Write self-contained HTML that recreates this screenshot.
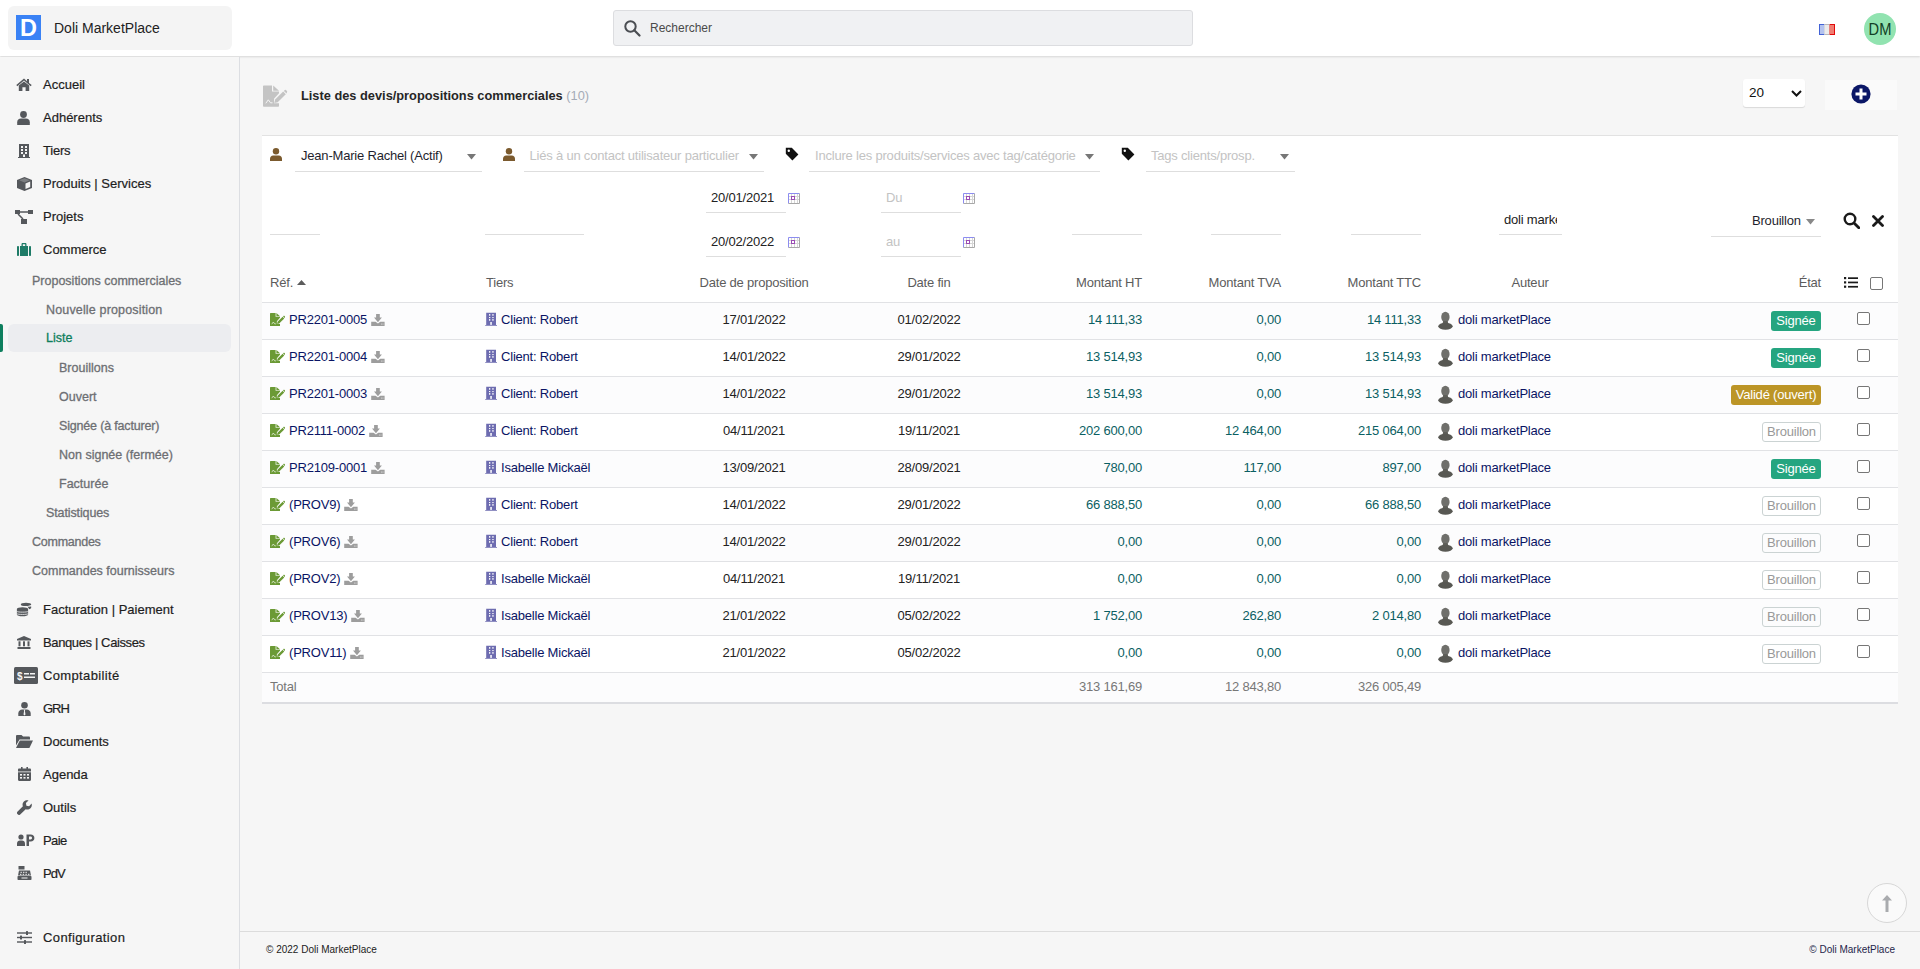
<!DOCTYPE html>
<html><head><meta charset="utf-8"><style>
html,body{margin:0;padding:0}
body{width:1920px;height:969px;position:relative;overflow:hidden;background:#f6f6f6;font-family:"Liberation Sans", sans-serif;}
#hdr{position:absolute;left:0;top:0;width:1920px;height:56px;background:#fff;box-shadow:0 1px 2px rgba(0,0,0,0.13)}
#side{position:absolute;left:0;top:57px;width:239px;height:912px;border-right:1px solid #dcdee2;background:#f6f6f6}
.t{position:absolute;white-space:nowrap}
.sm{font-size:13px;line-height:18px;color:#1e1e1e;-webkit-text-stroke:0.2px currentColor}
.ss{font-size:12.5px;line-height:18px;-webkit-text-stroke:0.3px currentColor}
</style></head><body>
<div id="hdr"></div>
<div style="position:absolute;left:8px;top:6px;width:224px;height:44px;background:#f4f4f4;border-radius:6px"></div>
<div style="position:absolute;left:16px;top:15px;width:25px;height:25px;background:#3a82f5"></div>
<div class="t" style="left:16px;top:16px;width:25px;line-height:25px;text-align:center;color:#fff;font-weight:bold;font-size:23.5px">D</div>
<div class="t" style="left:54px;top:19px;font-size:14px;line-height:18px;color:#222">Doli MarketPlace</div>
<div style="position:absolute;left:613px;top:10px;width:578px;height:34px;background:#f0f1f3;border:1px solid #dcdde0;border-radius:3px"></div>
<svg style="position:absolute;left:624px;top:20px;width:17px;height:17px" viewBox="0 0 17 17" ><circle cx="6.5" cy="6.5" r="5.2" fill="none" stroke="#4a4d52" stroke-width="2"/><path d="M10.3 10.3L15.5 15.5" stroke="#4a4d52" stroke-width="2.2" stroke-linecap="round"/></svg>
<div class="t" style="left:650px;top:20px;font-size:12px;line-height:16px;color:#4a4a4a">Rechercher</div>
<svg style="position:absolute;left:1819px;top:24px;width:16px;height:11px" viewBox="0 0 16 11" ><rect x="0" y="0" width="5.4" height="11" fill="#4262d6"/><rect x="1" y="1" width="4.4" height="9" fill="#b4c3ee"/><rect x="5.4" y="0" width="5.2" height="11" fill="#b9b9b9"/><rect x="5.4" y="1" width="5.2" height="9" fill="#ececec"/><rect x="10.6" y="0" width="5.4" height="11" fill="#e20a0a"/><rect x="10.6" y="1" width="4.4" height="9" fill="#f07d72"/></svg>
<div style="position:absolute;left:1864px;top:13px;width:32px;height:32px;border-radius:50%;background:#91e3b0"></div>
<div class="t" style="left:1864px;top:13px;width:32px;line-height:32px;text-align:center;font-size:16.3px;color:#123f26;transform:scaleX(0.9)">DM</div>
<div id="side"></div>
<svg style="position:absolute;left:16px;top:78px;width:16px;height:13px" viewBox="0 0 16 13" ><path fill="#55585c" d="M8 0.6L0.3 7.1l1 1.1L8 2.6l6.7 5.6 1-1.1L13 4.9V1h-2v2.2z"/><path fill="#55585c" d="M2.8 7.6L8 3.4l5.2 4.2V13H9.6V9.3H6.4V13H2.8z"/></svg>
<div class="t sm" style="left:43px;top:76px;letter-spacing:0px">Accueil</div>
<svg style="position:absolute;left:17px;top:111px;width:13px;height:14px" viewBox="0 0 13 14" ><circle cx="6.5" cy="3.5" r="3.4" fill="#55585c"/><path fill="#55585c" d="M0.2 11.2C0.2 9 1.8 7.6 4 7.6h5c2.2 0 3.8 1.4 3.8 3.6V14H0.2z"/></svg>
<div class="t sm" style="left:43px;top:109px;letter-spacing:0px">Adhérents</div>
<svg style="position:absolute;left:18px;top:144px;width:12px;height:14px" viewBox="0 0 12 14" ><path fill="#55585c" d="M1 0h10v13h1v1H0v-1h1z"/><g fill="#f5f5f5"><rect x="3" y="2" width="2" height="2"/><rect x="7" y="2" width="2" height="2"/><rect x="3" y="5" width="2" height="2"/><rect x="7" y="5" width="2" height="2"/><rect x="3" y="8" width="2" height="2"/><rect x="7" y="8" width="2" height="2"/><rect x="5" y="10.5" width="2" height="2.5"/></g></svg>
<div class="t sm" style="left:43px;top:142px;letter-spacing:-0.2px">Tiers</div>
<svg style="position:absolute;left:17px;top:177px;width:15px;height:14px" viewBox="0 0 15 14" ><path fill="#55585c" d="M7.5 0L15 3v8l-7.5 3L0 11V3z"/><path fill="#f5f5f5" d="M2 4.2l5.5 2.2v5.3L2 9.6z" opacity="0"/><path fill="#f5f5f5" d="M8.5 6.4l4.7-1.9v5.6l-4.7 1.9z"/><path fill="#f5f5f5" d="M2.2 3.3L7.5 1.3l5.3 2-5.3 2.1z" opacity="0.25"/></svg>
<div class="t sm" style="left:43px;top:175px;letter-spacing:0px">Produits | Services</div>
<svg style="position:absolute;left:15px;top:210px;width:18px;height:14px" viewBox="0 0 18 14" ><rect x="0" y="0" width="5" height="4" fill="#55585c"/><rect x="13" y="0" width="5" height="4" fill="#55585c"/><rect x="6" y="9" width="6" height="5" fill="#55585c"/><path d="M5 2h8M3 4l5 5" stroke="#55585c" stroke-width="1.5" fill="none"/></svg>
<div class="t sm" style="left:43px;top:208px;letter-spacing:0px">Projets</div>
<svg style="position:absolute;left:17px;top:243px;width:14px;height:13px" viewBox="0 0 14 13" ><rect x="0" y="3" width="2" height="10" rx="0.8" fill="#1e7b67"/><rect x="12" y="3" width="2" height="10" rx="0.8" fill="#1e7b67"/><path fill="#1e7b67" d="M3 3h1.5V1.2C4.5 0.5 5 0 5.7 0h2.6c0.7 0 1.2 0.5 1.2 1.2V3H11v10H3zM5.8 1.2V3h2.4V1.2z"/></svg>
<div class="t sm" style="left:43px;top:241px;letter-spacing:0px">Commerce</div>
<svg style="position:absolute;left:16px;top:601px;width:16px;height:16px" viewBox="0 0 16 16" ><g fill="#55585c"><ellipse cx="10" cy="3.4" rx="5.2" ry="1.7"/><path d="M11.5 5.6h3.7v1.2c0 0.6-0.8 1.1-2 1.4z"/><ellipse cx="6.5" cy="8" rx="5.6" ry="1.8"/><path d="M0.9 8h11.2v5.4c0 1-2.5 1.8-5.6 1.8s-5.6-0.8-5.6-1.8z"/></g><g fill="none" stroke="#f5f5f5" stroke-width="0.8"><path d="M0.9 10.4c0.8 1 10.4 1 11.2 0M0.9 12.7c0.8 1 10.4 1 11.2 0M12.2 5.3c1 -0.2 2.6-0.6 3-1.2"/></g></svg>
<div class="t sm" style="left:43px;top:601px;letter-spacing:0px">Facturation | Paiement</div>
<svg style="position:absolute;left:17px;top:636px;width:14px;height:13px" viewBox="0 0 14 13" ><path fill="#55585c" d="M7 0l7 3v1.5H0V3z"/><rect x="1.5" y="5.3" width="2" height="5" fill="#55585c"/><rect x="6" y="5.3" width="2" height="5" fill="#55585c"/><rect x="10.5" y="5.3" width="2" height="5" fill="#55585c"/><rect x="0.5" y="11" width="13" height="2" fill="#55585c"/></svg>
<div class="t sm" style="left:43px;top:634px;letter-spacing:-0.38px">Banques | Caisses</div>
<svg style="position:absolute;left:14px;top:667px;width:24px;height:17px" viewBox="0 0 24 17" ><rect x="0" y="0" width="24" height="17" rx="1.5" fill="#55585c"/><text x="3" y="12.5" font-size="10" font-weight="bold" fill="#f5f5f5" font-family="Liberation Sans">$</text><rect x="10" y="6" width="5" height="1.5" fill="#f5f5f5"/><rect x="16" y="6" width="5" height="1.5" fill="#f5f5f5"/><rect x="10" y="9.5" width="11" height="1.5" fill="#f5f5f5"/></svg>
<div class="t sm" style="left:43px;top:667px;letter-spacing:0.36px">Comptabilité</div>
<svg style="position:absolute;left:18px;top:702px;width:13px;height:14px" viewBox="0 0 13 14" ><circle cx="6.5" cy="3.3" r="3.3" fill="#55585c"/><path fill="#55585c" d="M0.3 14v-2.5C0.3 9.3 2 7.6 4.2 7.6h4.6c2.2 0 3.9 1.7 3.9 3.9V14z"/><path fill="#f5f5f5" d="M5.8 7.8h1.4l-0.3 1.2 0.6 3.6-1 1-1-1 0.6-3.6z"/></svg>
<div class="t sm" style="left:43px;top:700px;letter-spacing:-1.0px">GRH</div>
<svg style="position:absolute;left:16px;top:735px;width:17px;height:13px" viewBox="0 0 17 13" ><path fill="#55585c" d="M0 1.2C0 0.5 0.5 0 1.2 0h4.3l1.6 1.6h5.7c0.7 0 1.2 0.5 1.2 1.2V4.5H3.5L0 10.5z"/><path fill="#55585c" d="M3.8 5.5H17l-3.6 7.5H0z"/></svg>
<div class="t sm" style="left:43px;top:733px;letter-spacing:0px">Documents</div>
<svg style="position:absolute;left:18px;top:767px;width:13px;height:14px" viewBox="0 0 13 14" ><path fill="#55585c" d="M3 0h1.6v1.6h3.8V0H10v1.6h1.8c0.7 0 1.2 0.5 1.2 1.2V4.5H0V2.8c0-0.7 0.5-1.2 1.2-1.2H3z"/><path fill="#55585c" d="M0 5.3h13v7.5c0 0.7-0.5 1.2-1.2 1.2H1.2C0.5 14 0 13.5 0 12.8z"/><g fill="#f5f5f5"><rect x="2" y="7" width="2" height="1.6"/><rect x="5.5" y="7" width="2" height="1.6"/><rect x="9" y="7" width="2" height="1.6"/><rect x="2" y="10" width="2" height="1.6"/><rect x="5.5" y="10" width="2" height="1.6"/><rect x="9" y="10" width="2" height="1.6"/></g></svg>
<div class="t sm" style="left:43px;top:766px;letter-spacing:0px">Agenda</div>
<svg style="position:absolute;left:17px;top:800px;width:15px;height:15px" viewBox="0 0 15 15" ><path fill="#55585c" d="M14.6 3.6c0.5 1.6 0.1 3.4-1.1 4.6-1.3 1.3-3.2 1.7-4.8 1L3.2 14.6c-0.6 0.6-1.6 0.6-2.2 0l-0.6-0.6c-0.6-0.6-0.6-1.6 0-2.2l5.5-5.5C5.2 4.7 5.6 2.8 6.9 1.5 8.1 0.3 9.9-0.1 11.5 0.4L8.9 3l0.5 2.7 2.7 0.5z"/></svg>
<div class="t sm" style="left:43px;top:799px;letter-spacing:0px">Outils</div>
<svg style="position:absolute;left:17px;top:834px;width:18px;height:12px" viewBox="0 0 18 12" ><circle cx="4" cy="3" r="2.6" fill="#55585c"/><path fill="#55585c" d="M0 12V9.6C0 7.8 1.3 6.5 3 6.5h2c1.7 0 3 1.3 3 3V12z"/><path fill="#55585c" d="M9.5 0.5h4.2c2.2 0 3.7 1.5 3.7 3.5s-1.5 3.5-3.7 3.5h-1.7V12H9.5zM12 2.6v2.8h1.6c0.9 0 1.4-0.6 1.4-1.4s-0.5-1.4-1.4-1.4z"/></svg>
<div class="t sm" style="left:43px;top:832px;letter-spacing:-0.6px">Paie</div>
<svg style="position:absolute;left:17px;top:866px;width:15px;height:14px" viewBox="0 0 15 14" ><path fill="#55585c" d="M1.5 0h6v3.5h-6z"/><path fill="#55585c" d="M2 4.5h11l1 5H1z"/><rect x="0.5" y="10" width="14" height="4" rx="0.8" fill="#55585c"/><g fill="#f5f5f5"><rect x="3.5" y="5.8" width="1.4" height="1"/><rect x="6" y="5.8" width="1.4" height="1"/><rect x="8.5" y="5.8" width="1.4" height="1"/><rect x="3" y="7.8" width="1.4" height="1"/><rect x="5.7" y="7.8" width="1.4" height="1"/><rect x="8.4" y="7.8" width="1.4" height="1"/><rect x="11" y="7.8" width="1.4" height="1"/><rect x="4.5" y="11.5" width="6" height="1"/></g></svg>
<div class="t sm" style="left:43px;top:865px;letter-spacing:-0.9px">PdV</div>
<svg style="position:absolute;left:17px;top:931px;width:15px;height:13px" viewBox="0 0 15 13" ><g fill="#55585c"><rect x="0" y="1.3" width="15" height="1.4"/><rect x="0" y="5.8" width="15" height="1.4"/><rect x="0" y="10.3" width="15" height="1.4"/><rect x="9" y="0" width="2" height="4" rx="0.5"/><rect x="3" y="4.5" width="2" height="4" rx="0.5"/><rect x="7" y="9" width="2" height="4" rx="0.5"/></g></svg>
<div class="t sm" style="left:43px;top:929px;letter-spacing:0.38px">Configuration</div>
<div style="position:absolute;left:8px;top:324px;width:223px;height:28px;background:#ecedf0;border-radius:6px"></div>
<div style="position:absolute;left:0;top:324px;width:3px;height:28px;background:#0e7f5e;border-radius:0 2px 2px 0"></div>
<div class="t ss" style="left:32px;top:271.5px;color:#6d6f73;letter-spacing:0px">Propositions commerciales</div>
<div class="t ss" style="left:46px;top:300.5px;color:#6d6f73;letter-spacing:0.16px">Nouvelle proposition</div>
<div class="t ss" style="left:46px;top:329.0px;color:#0f7f5d;letter-spacing:0px">Liste</div>
<div class="t ss" style="left:59px;top:358.5px;color:#6d6f73;letter-spacing:0px">Brouillons</div>
<div class="t ss" style="left:59px;top:387.5px;color:#6d6f73;letter-spacing:0px">Ouvert</div>
<div class="t ss" style="left:59px;top:416.5px;color:#6d6f73;letter-spacing:-0.17px">Signée (à facturer)</div>
<div class="t ss" style="left:59px;top:445.5px;color:#6d6f73;letter-spacing:0px">Non signée (fermée)</div>
<div class="t ss" style="left:59px;top:474.5px;color:#6d6f73;letter-spacing:0px">Facturée</div>
<div class="t ss" style="left:46px;top:503.5px;color:#6d6f73;letter-spacing:-0.12px">Statistiques</div>
<div class="t ss" style="left:32px;top:532.5px;color:#6d6f73;letter-spacing:-0.25px">Commandes</div>
<div class="t ss" style="left:32px;top:561.5px;color:#6d6f73;letter-spacing:0px">Commandes fournisseurs</div>
<svg style="position:absolute;left:258px;top:80px;width:34px;height:32px" viewBox="0 0 34 32" ><path fill="#c4c4c4" d="M5 6.2Q5 5.4 5.8 5.4H14V11.5H21V13.2L16 18.8V23.2H21V26Q21 26.7 20.2 26.7H5.8Q5 26.7 5 26Z"/><path fill="#c4c4c4" d="M15.2 5.4L21 10.7H15.2Z"/><path fill="#c4c4c4" d="M16.3 22.9L17.1 19.6L25.2 11.6L27.8 14.2L19.7 22.2Z"/><path fill="#c4c4c4" d="M25.9 10.9L26.8 10Q27.4 9.6 27.9 10L29 11.1Q29.4 11.6 29 12.2L28.5 13.5Z"/><path d="M7.8 23.3L10.3 19.8L12.5 22.8L14.5 22.8" stroke="#f5f5f5" stroke-width="1" fill="none"/></svg>
<div class="t" style="left:301px;top:88px;font-size:12.8px;line-height:16px;font-weight:bold;color:#262626">Liste des devis/propositions commerciales <span style="color:#a4abb6;font-weight:normal">(10)</span></div>
<div style="position:absolute;left:1743px;top:79px;width:62px;height:28px;background:#fff;border-radius:3px;box-shadow:0 1px 1px rgba(0,0,0,0.12)"></div>
<div class="t" style="left:1749px;top:85px;font-size:13.5px;line-height:16px;color:#111">20</div>
<svg style="position:absolute;left:1791px;top:90px;width:11px;height:7px" viewBox="0 0 11 7" ><path d="M1 1l4.5 4.5L10 1" stroke="#111" stroke-width="2" fill="none"/></svg>
<div style="position:absolute;left:1825px;top:80px;width:72px;height:30px;background:#fafafa"></div>
<svg style="position:absolute;left:1851px;top:84px;width:20px;height:20px" viewBox="0 0 20 20" ><circle cx="10" cy="10" r="9.6" fill="#0b1767"/><path d="M10 4.5v11M4.5 10h11" stroke="#fff" stroke-width="3"/></svg>
<div style="position:absolute;left:262px;top:135px;width:1636px;height:567px;background:#fff;border-top:1px solid #e2e2e2"></div>
<svg style="position:absolute;left:270px;top:148px;width:12px;height:13px" viewBox="0 0 12 13" ><circle cx="6" cy="3.2" r="3.2" fill="#7b5a2e"/><path fill="#7b5a2e" d="M0 13v-2.2C0 8.9 1.3 7.6 3.2 7.6h5.6c1.9 0 3.2 1.3 3.2 3.2V13z"/></svg>
<div class="t" style="left:301px;top:148px;font-size:13px;line-height:15px;color:#1f1f2e;letter-spacing:-0.2px;font-weight:normal;">Jean-Marie Rachel (Actif)</div>
<svg style="position:absolute;left:467px;top:154px;width:9px;height:6px" viewBox="0 0 9 6" ><path fill="#777" d="M0 0h9L4.5 5.5z"/></svg>
<div style="position:absolute;left:295px;top:171px;width:187px;height:1px;background:#dedede"></div>
<svg style="position:absolute;left:503px;top:148px;width:12px;height:13px" viewBox="0 0 12 13" ><circle cx="6" cy="3.2" r="3.2" fill="#7b5a2e"/><path fill="#7b5a2e" d="M0 13v-2.2C0 8.9 1.3 7.6 3.2 7.6h5.6c1.9 0 3.2 1.3 3.2 3.2V13z"/></svg>
<div class="t" style="left:529.5px;top:148px;font-size:13px;line-height:15px;color:#c3c3c3;letter-spacing:-0.2px;font-weight:normal;">Liés à un contact utilisateur particulier</div>
<svg style="position:absolute;left:749px;top:154px;width:9px;height:6px" viewBox="0 0 9 6" ><path fill="#777" d="M0 0h9L4.5 5.5z"/></svg>
<div style="position:absolute;left:524px;top:171px;width:240px;height:1px;background:#dedede"></div>
<svg style="position:absolute;left:785px;top:147px;width:14px;height:14px" viewBox="0 0 14 14" ><path fill="#111" d="M0.8 0.8h6l6.6 6.6-6 6-6.6-6.6z"/><circle cx="3.8" cy="3.8" r="1.2" fill="#fff"/></svg>
<div class="t" style="left:815px;top:148px;font-size:13px;line-height:15px;color:#c3c3c3;letter-spacing:-0.2px;font-weight:normal;">Inclure les produits/services avec tag/catégorie</div>
<svg style="position:absolute;left:1085px;top:154px;width:9px;height:6px" viewBox="0 0 9 6" ><path fill="#777" d="M0 0h9L4.5 5.5z"/></svg>
<div style="position:absolute;left:809px;top:171px;width:291px;height:1px;background:#dedede"></div>
<svg style="position:absolute;left:1121px;top:147px;width:14px;height:14px" viewBox="0 0 14 14" ><path fill="#111" d="M0.8 0.8h6l6.6 6.6-6 6-6.6-6.6z"/><circle cx="3.8" cy="3.8" r="1.2" fill="#fff"/></svg>
<div class="t" style="left:1151px;top:148px;font-size:13px;line-height:15px;color:#c3c3c3;letter-spacing:-0.2px;font-weight:normal;">Tags clients/prosp.</div>
<svg style="position:absolute;left:1280px;top:154px;width:9px;height:6px" viewBox="0 0 9 6" ><path fill="#777" d="M0 0h9L4.5 5.5z"/></svg>
<div style="position:absolute;left:1146px;top:171px;width:149px;height:1px;background:#dedede"></div>
<div style="position:absolute;left:270px;top:234px;width:50px;height:1px;background:#dedede"></div>
<div style="position:absolute;left:485px;top:234px;width:99px;height:1px;background:#dedede"></div>
<div class="t" style="left:711px;top:190px;font-size:13px;line-height:15px;color:#222;letter-spacing:-0.2px;font-weight:normal;">20/01/2021</div>
<svg style="position:absolute;left:788px;top:193px;width:12px;height:11px" viewBox="0 0 12 11" ><rect x="0" y="0" width="12" height="11" fill="#fff"/><path d="M3.5 1v9M6.5 1v9M9.5 1v9M1 3.5h10M1 6.5h10" stroke="#d6d6d6" stroke-width="1"/><path d="M0.5 10.5V0.5H11.5" stroke="#8c8cf0" stroke-width="1" fill="none"/><path d="M11.5 0.5V10.5H0.5" stroke="#a8a8a8" stroke-width="1" fill="none"/><rect x="3.5" y="3.5" width="3" height="3" fill="none" stroke="#9a4cb4" stroke-width="1"/></svg>
<div style="position:absolute;left:706px;top:212px;width:80px;height:1px;background:#dedede"></div>
<div class="t" style="left:711px;top:234px;font-size:13px;line-height:15px;color:#222;letter-spacing:-0.2px;font-weight:normal;">20/02/2022</div>
<svg style="position:absolute;left:788px;top:237px;width:12px;height:11px" viewBox="0 0 12 11" ><rect x="0" y="0" width="12" height="11" fill="#fff"/><path d="M3.5 1v9M6.5 1v9M9.5 1v9M1 3.5h10M1 6.5h10" stroke="#d6d6d6" stroke-width="1"/><path d="M0.5 10.5V0.5H11.5" stroke="#8c8cf0" stroke-width="1" fill="none"/><path d="M11.5 0.5V10.5H0.5" stroke="#a8a8a8" stroke-width="1" fill="none"/><rect x="3.5" y="3.5" width="3" height="3" fill="none" stroke="#9a4cb4" stroke-width="1"/></svg>
<div style="position:absolute;left:706px;top:256px;width:80px;height:1px;background:#dedede"></div>
<div class="t" style="left:886px;top:190px;font-size:13px;line-height:15px;color:#c3c3c3;letter-spacing:-0.2px;font-weight:normal;">Du</div>
<svg style="position:absolute;left:963px;top:193px;width:12px;height:11px" viewBox="0 0 12 11" ><rect x="0" y="0" width="12" height="11" fill="#fff"/><path d="M3.5 1v9M6.5 1v9M9.5 1v9M1 3.5h10M1 6.5h10" stroke="#d6d6d6" stroke-width="1"/><path d="M0.5 10.5V0.5H11.5" stroke="#8c8cf0" stroke-width="1" fill="none"/><path d="M11.5 0.5V10.5H0.5" stroke="#a8a8a8" stroke-width="1" fill="none"/><rect x="3.5" y="3.5" width="3" height="3" fill="none" stroke="#9a4cb4" stroke-width="1"/></svg>
<div style="position:absolute;left:881px;top:212px;width:80px;height:1px;background:#dedede"></div>
<div class="t" style="left:886px;top:234px;font-size:13px;line-height:15px;color:#c3c3c3;letter-spacing:-0.2px;font-weight:normal;">au</div>
<svg style="position:absolute;left:963px;top:237px;width:12px;height:11px" viewBox="0 0 12 11" ><rect x="0" y="0" width="12" height="11" fill="#fff"/><path d="M3.5 1v9M6.5 1v9M9.5 1v9M1 3.5h10M1 6.5h10" stroke="#d6d6d6" stroke-width="1"/><path d="M0.5 10.5V0.5H11.5" stroke="#8c8cf0" stroke-width="1" fill="none"/><path d="M11.5 0.5V10.5H0.5" stroke="#a8a8a8" stroke-width="1" fill="none"/><rect x="3.5" y="3.5" width="3" height="3" fill="none" stroke="#9a4cb4" stroke-width="1"/></svg>
<div style="position:absolute;left:881px;top:256px;width:80px;height:1px;background:#dedede"></div>
<div style="position:absolute;left:1072px;top:234px;width:70px;height:1px;background:#dedede"></div>
<div style="position:absolute;left:1211px;top:234px;width:70px;height:1px;background:#dedede"></div>
<div style="position:absolute;left:1351px;top:234px;width:70px;height:1px;background:#dedede"></div>
<div class="t" style="left:1504px;top:212px;width:53px;overflow:hidden;font-size:13px;line-height:15px;color:#222;letter-spacing:-0.2px">doli marketPlace</div>
<div style="position:absolute;left:1499px;top:234px;width:63px;height:1px;background:#dedede"></div>
<div class="t" style="left:1752px;top:213px;font-size:13px;line-height:15px;color:#1f1f2e;letter-spacing:-0.2px;font-weight:normal;">Brouillon</div>
<svg style="position:absolute;left:1806px;top:219px;width:9px;height:6px" viewBox="0 0 9 6" ><path fill="#888" d="M0 0h9L4.5 5.5z"/></svg>
<div style="position:absolute;left:1711px;top:236px;width:110px;height:1px;background:#dedede"></div>
<svg style="position:absolute;left:1843px;top:212px;width:17px;height:17px" viewBox="0 0 17 17" ><circle cx="7" cy="7" r="5.3" fill="none" stroke="#1a1a1a" stroke-width="2.4"/><path d="M11 11l4.8 4.8" stroke="#1a1a1a" stroke-width="2.8" stroke-linecap="round"/></svg>
<svg style="position:absolute;left:1872px;top:215px;width:12px;height:12px" viewBox="0 0 12 12" ><path d="M1.5 1.5l9 9M10.5 1.5l-9 9" stroke="#1a1a1a" stroke-width="2.8" stroke-linecap="round"/></svg>
<div class="t" style="left:270px;top:275px;font-size:13px;line-height:15px;color:#5c5c5c;letter-spacing:-0.2px;font-weight:normal;">Réf.</div>
<svg style="position:absolute;left:297px;top:280px;width:9px;height:5px" viewBox="0 0 9 5" ><path fill="#5c5c5c" d="M0 5h9L4.5 0z"/></svg>
<div class="t" style="left:486px;top:275px;font-size:13px;line-height:15px;color:#5c5c5c;letter-spacing:-0.2px;font-weight:normal;">Tiers</div>
<div class="t" style="left:454px;width:600px;text-align:center;top:275px;font-size:13px;line-height:15px;color:#5c5c5c;letter-spacing:-0.2px;font-weight:normal;">Date de proposition</div>
<div class="t" style="left:629px;width:600px;text-align:center;top:275px;font-size:13px;line-height:15px;color:#5c5c5c;letter-spacing:-0.2px;font-weight:normal;">Date fin</div>
<div class="t" style="left:542px;width:600px;text-align:right;top:275px;font-size:13px;line-height:15px;color:#5c5c5c;letter-spacing:-0.2px;font-weight:normal;">Montant HT</div>
<div class="t" style="left:681px;width:600px;text-align:right;top:275px;font-size:13px;line-height:15px;color:#5c5c5c;letter-spacing:-0.2px;font-weight:normal;">Montant TVA</div>
<div class="t" style="left:821px;width:600px;text-align:right;top:275px;font-size:13px;line-height:15px;color:#5c5c5c;letter-spacing:-0.2px;font-weight:normal;">Montant TTC</div>
<div class="t" style="left:1230px;width:600px;text-align:center;top:275px;font-size:13px;line-height:15px;color:#5c5c5c;letter-spacing:-0.2px;font-weight:normal;">Auteur</div>
<div class="t" style="left:1221px;width:600px;text-align:right;top:275px;font-size:13px;line-height:15px;color:#5c5c5c;letter-spacing:-0.2px;font-weight:normal;">État</div>
<svg style="position:absolute;left:1844px;top:277px;width:14px;height:11px" viewBox="0 0 14 11" ><g fill="#1a1a1a"><rect x="0" y="0" width="2.2" height="2.2"/><rect x="0" y="4.3" width="2.2" height="2.2"/><rect x="0" y="8.6" width="2.2" height="2.2"/><rect x="4" y="0.3" width="10" height="1.7"/><rect x="4" y="4.6" width="10" height="1.7"/><rect x="4" y="8.9" width="10" height="1.7"/></g></svg>
<div style="position:absolute;left:1870px;top:277px;width:11px;height:11px;border:1px solid #767676;border-radius:2px;background:#fff"></div>
<div style="position:absolute;left:262px;top:302px;width:1636px;height:1px;background:#e1e2e5"></div>
<div style="position:absolute;left:262px;top:303px;width:1636px;height:36px;background:#fcfcfd"></div>
<div style="position:absolute;left:262px;top:339px;width:1636px;height:1px;background:#e1e2e5"></div>
<svg style="position:absolute;left:269.8px;top:312.5px;width:15px;height:13.3px" viewBox="5 5.4 24 21.3" ><path fill="#6b9a35" d="M5 6.2Q5 5.4 5.8 5.4H14V11.5H21V13.2L16 18.8V23.2H21V26Q21 26.7 20.2 26.7H5.8Q5 26.7 5 26Z"/><path fill="#6b9a35" d="M15.2 5.4L21 10.7H15.2Z"/><path fill="#6b9a35" d="M16.3 22.9L17.1 19.6L25.2 11.6L27.8 14.2L19.7 22.2Z"/><path fill="#6b9a35" d="M25.9 10.9L26.8 10Q27.4 9.6 27.9 10L29 11.1Q29.4 11.6 29 12.2L28.5 13.5Z"/><path d="M7.8 23.3L10.3 19.8L12.5 22.8L14.5 22.8" stroke="#fff" stroke-width="1" fill="none"/></svg>
<div class="t" style="left:289px;top:312px;font-size:13px;line-height:15px;color:#0a1464;letter-spacing:-0.2px;font-weight:normal;">PR2201-0005</div>
<svg style="position:absolute;left:371px;top:314px;width:14px;height:12px" viewBox="0 0 14 12" ><path fill="#9d9d9d" d="M5.1 0h3.7v3.6h2.1L6.95 8.2 3 3.6h2.1z"/><path fill="#9d9d9d" d="M0.2 7.7h4.4l2.35 1.9 2.35-1.9h4.3V12H0.2z"/><circle cx="10.6" cy="10.1" r="0.5" fill="#e8e8e8"/><circle cx="12" cy="10.1" r="0.5" fill="#e8e8e8"/></svg>
<svg style="position:absolute;left:485px;top:312px;width:13px;height:14px" viewBox="0 0 13 14" ><path fill="#6d6cb0" d="M1.2 0.8h9.8v12.1h1v0.9H0.2v-0.9h1z"/><g fill="#fff"><rect x="4" y="2.1" width="1.3" height="1.6"/><rect x="7.3" y="2.1" width="1.3" height="1.6"/><rect x="4" y="5" width="1.3" height="1.1"/><rect x="7.3" y="5" width="1.3" height="1.1"/><rect x="4" y="7.1" width="1.3" height="1.6"/><rect x="7.3" y="7.1" width="1.3" height="1.6"/><rect x="5.3" y="10" width="1.5" height="2.9"/></g></svg>
<div class="t" style="left:501px;top:312px;font-size:13px;line-height:15px;color:#0a1464;letter-spacing:-0.2px;font-weight:normal;">Client: Robert</div>
<div class="t" style="left:454px;width:600px;text-align:center;top:312px;font-size:13px;line-height:15px;color:#222;letter-spacing:-0.2px;font-weight:normal;">17/01/2022</div>
<div class="t" style="left:629px;width:600px;text-align:center;top:312px;font-size:13px;line-height:15px;color:#222;letter-spacing:-0.2px;font-weight:normal;">01/02/2022</div>
<div class="t" style="left:542px;width:600px;text-align:right;top:312px;font-size:13px;line-height:15px;color:#0b5f63;letter-spacing:-0.2px;font-weight:normal;">14 111,33</div>
<div class="t" style="left:681px;width:600px;text-align:right;top:312px;font-size:13px;line-height:15px;color:#0b5f63;letter-spacing:-0.2px;font-weight:normal;">0,00</div>
<div class="t" style="left:821px;width:600px;text-align:right;top:312px;font-size:13px;line-height:15px;color:#0b5f63;letter-spacing:-0.2px;font-weight:normal;">14 111,33</div>
<svg style="position:absolute;left:1432px;top:306px;width:28px;height:28px" viewBox="0 0 28 28" ><ellipse cx="13.4" cy="11" rx="4.2" ry="5.3" fill="#6f6f6b"/><path fill="#5f5f5a" d="M11.2 15h4.4l0.6 2.3h-5.6z"/><ellipse cx="13.45" cy="20.3" rx="7.2" ry="3.5" fill="#585853"/></svg>
<div class="t" style="left:1458px;top:312px;font-size:13px;line-height:15px;color:#0a1464;letter-spacing:-0.2px;font-weight:normal;">doli marketPlace</div>
<div class="t" style="left:1771px;top:311px;width:50px;height:20px;background:#25a580;border-radius:3px;color:#fff;font-size:13px;line-height:20px;text-align:center;letter-spacing:-0.2px">Signée</div>
<div style="position:absolute;left:1857px;top:312px;width:11px;height:11px;border:1px solid #767676;border-radius:2px;background:#fff"></div>
<div style="position:absolute;left:262px;top:340px;width:1636px;height:36px;background:#ffffff"></div>
<div style="position:absolute;left:262px;top:376px;width:1636px;height:1px;background:#e1e2e5"></div>
<svg style="position:absolute;left:269.8px;top:349.5px;width:15px;height:13.3px" viewBox="5 5.4 24 21.3" ><path fill="#6b9a35" d="M5 6.2Q5 5.4 5.8 5.4H14V11.5H21V13.2L16 18.8V23.2H21V26Q21 26.7 20.2 26.7H5.8Q5 26.7 5 26Z"/><path fill="#6b9a35" d="M15.2 5.4L21 10.7H15.2Z"/><path fill="#6b9a35" d="M16.3 22.9L17.1 19.6L25.2 11.6L27.8 14.2L19.7 22.2Z"/><path fill="#6b9a35" d="M25.9 10.9L26.8 10Q27.4 9.6 27.9 10L29 11.1Q29.4 11.6 29 12.2L28.5 13.5Z"/><path d="M7.8 23.3L10.3 19.8L12.5 22.8L14.5 22.8" stroke="#fff" stroke-width="1" fill="none"/></svg>
<div class="t" style="left:289px;top:349px;font-size:13px;line-height:15px;color:#0a1464;letter-spacing:-0.2px;font-weight:normal;">PR2201-0004</div>
<svg style="position:absolute;left:371px;top:351px;width:14px;height:12px" viewBox="0 0 14 12" ><path fill="#9d9d9d" d="M5.1 0h3.7v3.6h2.1L6.95 8.2 3 3.6h2.1z"/><path fill="#9d9d9d" d="M0.2 7.7h4.4l2.35 1.9 2.35-1.9h4.3V12H0.2z"/><circle cx="10.6" cy="10.1" r="0.5" fill="#e8e8e8"/><circle cx="12" cy="10.1" r="0.5" fill="#e8e8e8"/></svg>
<svg style="position:absolute;left:485px;top:349px;width:13px;height:14px" viewBox="0 0 13 14" ><path fill="#6d6cb0" d="M1.2 0.8h9.8v12.1h1v0.9H0.2v-0.9h1z"/><g fill="#fff"><rect x="4" y="2.1" width="1.3" height="1.6"/><rect x="7.3" y="2.1" width="1.3" height="1.6"/><rect x="4" y="5" width="1.3" height="1.1"/><rect x="7.3" y="5" width="1.3" height="1.1"/><rect x="4" y="7.1" width="1.3" height="1.6"/><rect x="7.3" y="7.1" width="1.3" height="1.6"/><rect x="5.3" y="10" width="1.5" height="2.9"/></g></svg>
<div class="t" style="left:501px;top:349px;font-size:13px;line-height:15px;color:#0a1464;letter-spacing:-0.2px;font-weight:normal;">Client: Robert</div>
<div class="t" style="left:454px;width:600px;text-align:center;top:349px;font-size:13px;line-height:15px;color:#222;letter-spacing:-0.2px;font-weight:normal;">14/01/2022</div>
<div class="t" style="left:629px;width:600px;text-align:center;top:349px;font-size:13px;line-height:15px;color:#222;letter-spacing:-0.2px;font-weight:normal;">29/01/2022</div>
<div class="t" style="left:542px;width:600px;text-align:right;top:349px;font-size:13px;line-height:15px;color:#0b5f63;letter-spacing:-0.2px;font-weight:normal;">13 514,93</div>
<div class="t" style="left:681px;width:600px;text-align:right;top:349px;font-size:13px;line-height:15px;color:#0b5f63;letter-spacing:-0.2px;font-weight:normal;">0,00</div>
<div class="t" style="left:821px;width:600px;text-align:right;top:349px;font-size:13px;line-height:15px;color:#0b5f63;letter-spacing:-0.2px;font-weight:normal;">13 514,93</div>
<svg style="position:absolute;left:1432px;top:343px;width:28px;height:28px" viewBox="0 0 28 28" ><ellipse cx="13.4" cy="11" rx="4.2" ry="5.3" fill="#6f6f6b"/><path fill="#5f5f5a" d="M11.2 15h4.4l0.6 2.3h-5.6z"/><ellipse cx="13.45" cy="20.3" rx="7.2" ry="3.5" fill="#585853"/></svg>
<div class="t" style="left:1458px;top:349px;font-size:13px;line-height:15px;color:#0a1464;letter-spacing:-0.2px;font-weight:normal;">doli marketPlace</div>
<div class="t" style="left:1771px;top:348px;width:50px;height:20px;background:#25a580;border-radius:3px;color:#fff;font-size:13px;line-height:20px;text-align:center;letter-spacing:-0.2px">Signée</div>
<div style="position:absolute;left:1857px;top:349px;width:11px;height:11px;border:1px solid #767676;border-radius:2px;background:#fff"></div>
<div style="position:absolute;left:262px;top:377px;width:1636px;height:36px;background:#fcfcfd"></div>
<div style="position:absolute;left:262px;top:413px;width:1636px;height:1px;background:#e1e2e5"></div>
<svg style="position:absolute;left:269.8px;top:386.5px;width:15px;height:13.3px" viewBox="5 5.4 24 21.3" ><path fill="#6b9a35" d="M5 6.2Q5 5.4 5.8 5.4H14V11.5H21V13.2L16 18.8V23.2H21V26Q21 26.7 20.2 26.7H5.8Q5 26.7 5 26Z"/><path fill="#6b9a35" d="M15.2 5.4L21 10.7H15.2Z"/><path fill="#6b9a35" d="M16.3 22.9L17.1 19.6L25.2 11.6L27.8 14.2L19.7 22.2Z"/><path fill="#6b9a35" d="M25.9 10.9L26.8 10Q27.4 9.6 27.9 10L29 11.1Q29.4 11.6 29 12.2L28.5 13.5Z"/><path d="M7.8 23.3L10.3 19.8L12.5 22.8L14.5 22.8" stroke="#fff" stroke-width="1" fill="none"/></svg>
<div class="t" style="left:289px;top:386px;font-size:13px;line-height:15px;color:#0a1464;letter-spacing:-0.2px;font-weight:normal;">PR2201-0003</div>
<svg style="position:absolute;left:371px;top:388px;width:14px;height:12px" viewBox="0 0 14 12" ><path fill="#9d9d9d" d="M5.1 0h3.7v3.6h2.1L6.95 8.2 3 3.6h2.1z"/><path fill="#9d9d9d" d="M0.2 7.7h4.4l2.35 1.9 2.35-1.9h4.3V12H0.2z"/><circle cx="10.6" cy="10.1" r="0.5" fill="#e8e8e8"/><circle cx="12" cy="10.1" r="0.5" fill="#e8e8e8"/></svg>
<svg style="position:absolute;left:485px;top:386px;width:13px;height:14px" viewBox="0 0 13 14" ><path fill="#6d6cb0" d="M1.2 0.8h9.8v12.1h1v0.9H0.2v-0.9h1z"/><g fill="#fff"><rect x="4" y="2.1" width="1.3" height="1.6"/><rect x="7.3" y="2.1" width="1.3" height="1.6"/><rect x="4" y="5" width="1.3" height="1.1"/><rect x="7.3" y="5" width="1.3" height="1.1"/><rect x="4" y="7.1" width="1.3" height="1.6"/><rect x="7.3" y="7.1" width="1.3" height="1.6"/><rect x="5.3" y="10" width="1.5" height="2.9"/></g></svg>
<div class="t" style="left:501px;top:386px;font-size:13px;line-height:15px;color:#0a1464;letter-spacing:-0.2px;font-weight:normal;">Client: Robert</div>
<div class="t" style="left:454px;width:600px;text-align:center;top:386px;font-size:13px;line-height:15px;color:#222;letter-spacing:-0.2px;font-weight:normal;">14/01/2022</div>
<div class="t" style="left:629px;width:600px;text-align:center;top:386px;font-size:13px;line-height:15px;color:#222;letter-spacing:-0.2px;font-weight:normal;">29/01/2022</div>
<div class="t" style="left:542px;width:600px;text-align:right;top:386px;font-size:13px;line-height:15px;color:#0b5f63;letter-spacing:-0.2px;font-weight:normal;">13 514,93</div>
<div class="t" style="left:681px;width:600px;text-align:right;top:386px;font-size:13px;line-height:15px;color:#0b5f63;letter-spacing:-0.2px;font-weight:normal;">0,00</div>
<div class="t" style="left:821px;width:600px;text-align:right;top:386px;font-size:13px;line-height:15px;color:#0b5f63;letter-spacing:-0.2px;font-weight:normal;">13 514,93</div>
<svg style="position:absolute;left:1432px;top:380px;width:28px;height:28px" viewBox="0 0 28 28" ><ellipse cx="13.4" cy="11" rx="4.2" ry="5.3" fill="#6f6f6b"/><path fill="#5f5f5a" d="M11.2 15h4.4l0.6 2.3h-5.6z"/><ellipse cx="13.45" cy="20.3" rx="7.2" ry="3.5" fill="#585853"/></svg>
<div class="t" style="left:1458px;top:386px;font-size:13px;line-height:15px;color:#0a1464;letter-spacing:-0.2px;font-weight:normal;">doli marketPlace</div>
<div class="t" style="left:1731px;top:385px;width:90px;height:20px;background:#bc9526;border-radius:3px;color:#fff;font-size:13px;line-height:20px;text-align:center;letter-spacing:-0.2px">Validé (ouvert)</div>
<div style="position:absolute;left:1857px;top:386px;width:11px;height:11px;border:1px solid #767676;border-radius:2px;background:#fff"></div>
<div style="position:absolute;left:262px;top:414px;width:1636px;height:36px;background:#ffffff"></div>
<div style="position:absolute;left:262px;top:450px;width:1636px;height:1px;background:#e1e2e5"></div>
<svg style="position:absolute;left:269.8px;top:423.5px;width:15px;height:13.3px" viewBox="5 5.4 24 21.3" ><path fill="#6b9a35" d="M5 6.2Q5 5.4 5.8 5.4H14V11.5H21V13.2L16 18.8V23.2H21V26Q21 26.7 20.2 26.7H5.8Q5 26.7 5 26Z"/><path fill="#6b9a35" d="M15.2 5.4L21 10.7H15.2Z"/><path fill="#6b9a35" d="M16.3 22.9L17.1 19.6L25.2 11.6L27.8 14.2L19.7 22.2Z"/><path fill="#6b9a35" d="M25.9 10.9L26.8 10Q27.4 9.6 27.9 10L29 11.1Q29.4 11.6 29 12.2L28.5 13.5Z"/><path d="M7.8 23.3L10.3 19.8L12.5 22.8L14.5 22.8" stroke="#fff" stroke-width="1" fill="none"/></svg>
<div class="t" style="left:289px;top:423px;font-size:13px;line-height:15px;color:#0a1464;letter-spacing:-0.2px;font-weight:normal;">PR2111-0002</div>
<svg style="position:absolute;left:369px;top:425px;width:14px;height:12px" viewBox="0 0 14 12" ><path fill="#9d9d9d" d="M5.1 0h3.7v3.6h2.1L6.95 8.2 3 3.6h2.1z"/><path fill="#9d9d9d" d="M0.2 7.7h4.4l2.35 1.9 2.35-1.9h4.3V12H0.2z"/><circle cx="10.6" cy="10.1" r="0.5" fill="#e8e8e8"/><circle cx="12" cy="10.1" r="0.5" fill="#e8e8e8"/></svg>
<svg style="position:absolute;left:485px;top:423px;width:13px;height:14px" viewBox="0 0 13 14" ><path fill="#6d6cb0" d="M1.2 0.8h9.8v12.1h1v0.9H0.2v-0.9h1z"/><g fill="#fff"><rect x="4" y="2.1" width="1.3" height="1.6"/><rect x="7.3" y="2.1" width="1.3" height="1.6"/><rect x="4" y="5" width="1.3" height="1.1"/><rect x="7.3" y="5" width="1.3" height="1.1"/><rect x="4" y="7.1" width="1.3" height="1.6"/><rect x="7.3" y="7.1" width="1.3" height="1.6"/><rect x="5.3" y="10" width="1.5" height="2.9"/></g></svg>
<div class="t" style="left:501px;top:423px;font-size:13px;line-height:15px;color:#0a1464;letter-spacing:-0.2px;font-weight:normal;">Client: Robert</div>
<div class="t" style="left:454px;width:600px;text-align:center;top:423px;font-size:13px;line-height:15px;color:#222;letter-spacing:-0.2px;font-weight:normal;">04/11/2021</div>
<div class="t" style="left:629px;width:600px;text-align:center;top:423px;font-size:13px;line-height:15px;color:#222;letter-spacing:-0.2px;font-weight:normal;">19/11/2021</div>
<div class="t" style="left:542px;width:600px;text-align:right;top:423px;font-size:13px;line-height:15px;color:#0b5f63;letter-spacing:-0.2px;font-weight:normal;">202 600,00</div>
<div class="t" style="left:681px;width:600px;text-align:right;top:423px;font-size:13px;line-height:15px;color:#0b5f63;letter-spacing:-0.2px;font-weight:normal;">12 464,00</div>
<div class="t" style="left:821px;width:600px;text-align:right;top:423px;font-size:13px;line-height:15px;color:#0b5f63;letter-spacing:-0.2px;font-weight:normal;">215 064,00</div>
<svg style="position:absolute;left:1432px;top:417px;width:28px;height:28px" viewBox="0 0 28 28" ><ellipse cx="13.4" cy="11" rx="4.2" ry="5.3" fill="#6f6f6b"/><path fill="#5f5f5a" d="M11.2 15h4.4l0.6 2.3h-5.6z"/><ellipse cx="13.45" cy="20.3" rx="7.2" ry="3.5" fill="#585853"/></svg>
<div class="t" style="left:1458px;top:423px;font-size:13px;line-height:15px;color:#0a1464;letter-spacing:-0.2px;font-weight:normal;">doli marketPlace</div>
<div class="t" style="left:1762px;top:422px;width:57px;height:18px;border:1px solid #cbd3d3;border-radius:3px;color:#999;font-size:13px;line-height:18px;text-align:center;letter-spacing:-0.2px">Brouillon</div>
<div style="position:absolute;left:1857px;top:423px;width:11px;height:11px;border:1px solid #767676;border-radius:2px;background:#fff"></div>
<div style="position:absolute;left:262px;top:451px;width:1636px;height:36px;background:#fcfcfd"></div>
<div style="position:absolute;left:262px;top:487px;width:1636px;height:1px;background:#e1e2e5"></div>
<svg style="position:absolute;left:269.8px;top:460.5px;width:15px;height:13.3px" viewBox="5 5.4 24 21.3" ><path fill="#6b9a35" d="M5 6.2Q5 5.4 5.8 5.4H14V11.5H21V13.2L16 18.8V23.2H21V26Q21 26.7 20.2 26.7H5.8Q5 26.7 5 26Z"/><path fill="#6b9a35" d="M15.2 5.4L21 10.7H15.2Z"/><path fill="#6b9a35" d="M16.3 22.9L17.1 19.6L25.2 11.6L27.8 14.2L19.7 22.2Z"/><path fill="#6b9a35" d="M25.9 10.9L26.8 10Q27.4 9.6 27.9 10L29 11.1Q29.4 11.6 29 12.2L28.5 13.5Z"/><path d="M7.8 23.3L10.3 19.8L12.5 22.8L14.5 22.8" stroke="#fff" stroke-width="1" fill="none"/></svg>
<div class="t" style="left:289px;top:460px;font-size:13px;line-height:15px;color:#0a1464;letter-spacing:-0.2px;font-weight:normal;">PR2109-0001</div>
<svg style="position:absolute;left:371px;top:462px;width:14px;height:12px" viewBox="0 0 14 12" ><path fill="#9d9d9d" d="M5.1 0h3.7v3.6h2.1L6.95 8.2 3 3.6h2.1z"/><path fill="#9d9d9d" d="M0.2 7.7h4.4l2.35 1.9 2.35-1.9h4.3V12H0.2z"/><circle cx="10.6" cy="10.1" r="0.5" fill="#e8e8e8"/><circle cx="12" cy="10.1" r="0.5" fill="#e8e8e8"/></svg>
<svg style="position:absolute;left:485px;top:460px;width:13px;height:14px" viewBox="0 0 13 14" ><path fill="#6d6cb0" d="M1.2 0.8h9.8v12.1h1v0.9H0.2v-0.9h1z"/><g fill="#fff"><rect x="4" y="2.1" width="1.3" height="1.6"/><rect x="7.3" y="2.1" width="1.3" height="1.6"/><rect x="4" y="5" width="1.3" height="1.1"/><rect x="7.3" y="5" width="1.3" height="1.1"/><rect x="4" y="7.1" width="1.3" height="1.6"/><rect x="7.3" y="7.1" width="1.3" height="1.6"/><rect x="5.3" y="10" width="1.5" height="2.9"/></g></svg>
<div class="t" style="left:501px;top:460px;font-size:13px;line-height:15px;color:#0a1464;letter-spacing:-0.2px;font-weight:normal;">Isabelle Mickaël</div>
<div class="t" style="left:454px;width:600px;text-align:center;top:460px;font-size:13px;line-height:15px;color:#222;letter-spacing:-0.2px;font-weight:normal;">13/09/2021</div>
<div class="t" style="left:629px;width:600px;text-align:center;top:460px;font-size:13px;line-height:15px;color:#222;letter-spacing:-0.2px;font-weight:normal;">28/09/2021</div>
<div class="t" style="left:542px;width:600px;text-align:right;top:460px;font-size:13px;line-height:15px;color:#0b5f63;letter-spacing:-0.2px;font-weight:normal;">780,00</div>
<div class="t" style="left:681px;width:600px;text-align:right;top:460px;font-size:13px;line-height:15px;color:#0b5f63;letter-spacing:-0.2px;font-weight:normal;">117,00</div>
<div class="t" style="left:821px;width:600px;text-align:right;top:460px;font-size:13px;line-height:15px;color:#0b5f63;letter-spacing:-0.2px;font-weight:normal;">897,00</div>
<svg style="position:absolute;left:1432px;top:454px;width:28px;height:28px" viewBox="0 0 28 28" ><ellipse cx="13.4" cy="11" rx="4.2" ry="5.3" fill="#6f6f6b"/><path fill="#5f5f5a" d="M11.2 15h4.4l0.6 2.3h-5.6z"/><ellipse cx="13.45" cy="20.3" rx="7.2" ry="3.5" fill="#585853"/></svg>
<div class="t" style="left:1458px;top:460px;font-size:13px;line-height:15px;color:#0a1464;letter-spacing:-0.2px;font-weight:normal;">doli marketPlace</div>
<div class="t" style="left:1771px;top:459px;width:50px;height:20px;background:#25a580;border-radius:3px;color:#fff;font-size:13px;line-height:20px;text-align:center;letter-spacing:-0.2px">Signée</div>
<div style="position:absolute;left:1857px;top:460px;width:11px;height:11px;border:1px solid #767676;border-radius:2px;background:#fff"></div>
<div style="position:absolute;left:262px;top:488px;width:1636px;height:36px;background:#ffffff"></div>
<div style="position:absolute;left:262px;top:524px;width:1636px;height:1px;background:#e1e2e5"></div>
<svg style="position:absolute;left:269.8px;top:497.5px;width:15px;height:13.3px" viewBox="5 5.4 24 21.3" ><path fill="#6b9a35" d="M5 6.2Q5 5.4 5.8 5.4H14V11.5H21V13.2L16 18.8V23.2H21V26Q21 26.7 20.2 26.7H5.8Q5 26.7 5 26Z"/><path fill="#6b9a35" d="M15.2 5.4L21 10.7H15.2Z"/><path fill="#6b9a35" d="M16.3 22.9L17.1 19.6L25.2 11.6L27.8 14.2L19.7 22.2Z"/><path fill="#6b9a35" d="M25.9 10.9L26.8 10Q27.4 9.6 27.9 10L29 11.1Q29.4 11.6 29 12.2L28.5 13.5Z"/><path d="M7.8 23.3L10.3 19.8L12.5 22.8L14.5 22.8" stroke="#fff" stroke-width="1" fill="none"/></svg>
<div class="t" style="left:289px;top:497px;font-size:13px;line-height:15px;color:#0a1464;letter-spacing:-0.2px;font-weight:normal;">(PROV9)</div>
<svg style="position:absolute;left:344px;top:499px;width:14px;height:12px" viewBox="0 0 14 12" ><path fill="#9d9d9d" d="M5.1 0h3.7v3.6h2.1L6.95 8.2 3 3.6h2.1z"/><path fill="#9d9d9d" d="M0.2 7.7h4.4l2.35 1.9 2.35-1.9h4.3V12H0.2z"/><circle cx="10.6" cy="10.1" r="0.5" fill="#e8e8e8"/><circle cx="12" cy="10.1" r="0.5" fill="#e8e8e8"/></svg>
<svg style="position:absolute;left:485px;top:497px;width:13px;height:14px" viewBox="0 0 13 14" ><path fill="#6d6cb0" d="M1.2 0.8h9.8v12.1h1v0.9H0.2v-0.9h1z"/><g fill="#fff"><rect x="4" y="2.1" width="1.3" height="1.6"/><rect x="7.3" y="2.1" width="1.3" height="1.6"/><rect x="4" y="5" width="1.3" height="1.1"/><rect x="7.3" y="5" width="1.3" height="1.1"/><rect x="4" y="7.1" width="1.3" height="1.6"/><rect x="7.3" y="7.1" width="1.3" height="1.6"/><rect x="5.3" y="10" width="1.5" height="2.9"/></g></svg>
<div class="t" style="left:501px;top:497px;font-size:13px;line-height:15px;color:#0a1464;letter-spacing:-0.2px;font-weight:normal;">Client: Robert</div>
<div class="t" style="left:454px;width:600px;text-align:center;top:497px;font-size:13px;line-height:15px;color:#222;letter-spacing:-0.2px;font-weight:normal;">14/01/2022</div>
<div class="t" style="left:629px;width:600px;text-align:center;top:497px;font-size:13px;line-height:15px;color:#222;letter-spacing:-0.2px;font-weight:normal;">29/01/2022</div>
<div class="t" style="left:542px;width:600px;text-align:right;top:497px;font-size:13px;line-height:15px;color:#0b5f63;letter-spacing:-0.2px;font-weight:normal;">66 888,50</div>
<div class="t" style="left:681px;width:600px;text-align:right;top:497px;font-size:13px;line-height:15px;color:#0b5f63;letter-spacing:-0.2px;font-weight:normal;">0,00</div>
<div class="t" style="left:821px;width:600px;text-align:right;top:497px;font-size:13px;line-height:15px;color:#0b5f63;letter-spacing:-0.2px;font-weight:normal;">66 888,50</div>
<svg style="position:absolute;left:1432px;top:491px;width:28px;height:28px" viewBox="0 0 28 28" ><ellipse cx="13.4" cy="11" rx="4.2" ry="5.3" fill="#6f6f6b"/><path fill="#5f5f5a" d="M11.2 15h4.4l0.6 2.3h-5.6z"/><ellipse cx="13.45" cy="20.3" rx="7.2" ry="3.5" fill="#585853"/></svg>
<div class="t" style="left:1458px;top:497px;font-size:13px;line-height:15px;color:#0a1464;letter-spacing:-0.2px;font-weight:normal;">doli marketPlace</div>
<div class="t" style="left:1762px;top:496px;width:57px;height:18px;border:1px solid #cbd3d3;border-radius:3px;color:#999;font-size:13px;line-height:18px;text-align:center;letter-spacing:-0.2px">Brouillon</div>
<div style="position:absolute;left:1857px;top:497px;width:11px;height:11px;border:1px solid #767676;border-radius:2px;background:#fff"></div>
<div style="position:absolute;left:262px;top:525px;width:1636px;height:36px;background:#fcfcfd"></div>
<div style="position:absolute;left:262px;top:561px;width:1636px;height:1px;background:#e1e2e5"></div>
<svg style="position:absolute;left:269.8px;top:534.5px;width:15px;height:13.3px" viewBox="5 5.4 24 21.3" ><path fill="#6b9a35" d="M5 6.2Q5 5.4 5.8 5.4H14V11.5H21V13.2L16 18.8V23.2H21V26Q21 26.7 20.2 26.7H5.8Q5 26.7 5 26Z"/><path fill="#6b9a35" d="M15.2 5.4L21 10.7H15.2Z"/><path fill="#6b9a35" d="M16.3 22.9L17.1 19.6L25.2 11.6L27.8 14.2L19.7 22.2Z"/><path fill="#6b9a35" d="M25.9 10.9L26.8 10Q27.4 9.6 27.9 10L29 11.1Q29.4 11.6 29 12.2L28.5 13.5Z"/><path d="M7.8 23.3L10.3 19.8L12.5 22.8L14.5 22.8" stroke="#fff" stroke-width="1" fill="none"/></svg>
<div class="t" style="left:289px;top:534px;font-size:13px;line-height:15px;color:#0a1464;letter-spacing:-0.2px;font-weight:normal;">(PROV6)</div>
<svg style="position:absolute;left:344px;top:536px;width:14px;height:12px" viewBox="0 0 14 12" ><path fill="#9d9d9d" d="M5.1 0h3.7v3.6h2.1L6.95 8.2 3 3.6h2.1z"/><path fill="#9d9d9d" d="M0.2 7.7h4.4l2.35 1.9 2.35-1.9h4.3V12H0.2z"/><circle cx="10.6" cy="10.1" r="0.5" fill="#e8e8e8"/><circle cx="12" cy="10.1" r="0.5" fill="#e8e8e8"/></svg>
<svg style="position:absolute;left:485px;top:534px;width:13px;height:14px" viewBox="0 0 13 14" ><path fill="#6d6cb0" d="M1.2 0.8h9.8v12.1h1v0.9H0.2v-0.9h1z"/><g fill="#fff"><rect x="4" y="2.1" width="1.3" height="1.6"/><rect x="7.3" y="2.1" width="1.3" height="1.6"/><rect x="4" y="5" width="1.3" height="1.1"/><rect x="7.3" y="5" width="1.3" height="1.1"/><rect x="4" y="7.1" width="1.3" height="1.6"/><rect x="7.3" y="7.1" width="1.3" height="1.6"/><rect x="5.3" y="10" width="1.5" height="2.9"/></g></svg>
<div class="t" style="left:501px;top:534px;font-size:13px;line-height:15px;color:#0a1464;letter-spacing:-0.2px;font-weight:normal;">Client: Robert</div>
<div class="t" style="left:454px;width:600px;text-align:center;top:534px;font-size:13px;line-height:15px;color:#222;letter-spacing:-0.2px;font-weight:normal;">14/01/2022</div>
<div class="t" style="left:629px;width:600px;text-align:center;top:534px;font-size:13px;line-height:15px;color:#222;letter-spacing:-0.2px;font-weight:normal;">29/01/2022</div>
<div class="t" style="left:542px;width:600px;text-align:right;top:534px;font-size:13px;line-height:15px;color:#0b5f63;letter-spacing:-0.2px;font-weight:normal;">0,00</div>
<div class="t" style="left:681px;width:600px;text-align:right;top:534px;font-size:13px;line-height:15px;color:#0b5f63;letter-spacing:-0.2px;font-weight:normal;">0,00</div>
<div class="t" style="left:821px;width:600px;text-align:right;top:534px;font-size:13px;line-height:15px;color:#0b5f63;letter-spacing:-0.2px;font-weight:normal;">0,00</div>
<svg style="position:absolute;left:1432px;top:528px;width:28px;height:28px" viewBox="0 0 28 28" ><ellipse cx="13.4" cy="11" rx="4.2" ry="5.3" fill="#6f6f6b"/><path fill="#5f5f5a" d="M11.2 15h4.4l0.6 2.3h-5.6z"/><ellipse cx="13.45" cy="20.3" rx="7.2" ry="3.5" fill="#585853"/></svg>
<div class="t" style="left:1458px;top:534px;font-size:13px;line-height:15px;color:#0a1464;letter-spacing:-0.2px;font-weight:normal;">doli marketPlace</div>
<div class="t" style="left:1762px;top:533px;width:57px;height:18px;border:1px solid #cbd3d3;border-radius:3px;color:#999;font-size:13px;line-height:18px;text-align:center;letter-spacing:-0.2px">Brouillon</div>
<div style="position:absolute;left:1857px;top:534px;width:11px;height:11px;border:1px solid #767676;border-radius:2px;background:#fff"></div>
<div style="position:absolute;left:262px;top:562px;width:1636px;height:36px;background:#ffffff"></div>
<div style="position:absolute;left:262px;top:598px;width:1636px;height:1px;background:#e1e2e5"></div>
<svg style="position:absolute;left:269.8px;top:571.5px;width:15px;height:13.3px" viewBox="5 5.4 24 21.3" ><path fill="#6b9a35" d="M5 6.2Q5 5.4 5.8 5.4H14V11.5H21V13.2L16 18.8V23.2H21V26Q21 26.7 20.2 26.7H5.8Q5 26.7 5 26Z"/><path fill="#6b9a35" d="M15.2 5.4L21 10.7H15.2Z"/><path fill="#6b9a35" d="M16.3 22.9L17.1 19.6L25.2 11.6L27.8 14.2L19.7 22.2Z"/><path fill="#6b9a35" d="M25.9 10.9L26.8 10Q27.4 9.6 27.9 10L29 11.1Q29.4 11.6 29 12.2L28.5 13.5Z"/><path d="M7.8 23.3L10.3 19.8L12.5 22.8L14.5 22.8" stroke="#fff" stroke-width="1" fill="none"/></svg>
<div class="t" style="left:289px;top:571px;font-size:13px;line-height:15px;color:#0a1464;letter-spacing:-0.2px;font-weight:normal;">(PROV2)</div>
<svg style="position:absolute;left:344px;top:573px;width:14px;height:12px" viewBox="0 0 14 12" ><path fill="#9d9d9d" d="M5.1 0h3.7v3.6h2.1L6.95 8.2 3 3.6h2.1z"/><path fill="#9d9d9d" d="M0.2 7.7h4.4l2.35 1.9 2.35-1.9h4.3V12H0.2z"/><circle cx="10.6" cy="10.1" r="0.5" fill="#e8e8e8"/><circle cx="12" cy="10.1" r="0.5" fill="#e8e8e8"/></svg>
<svg style="position:absolute;left:485px;top:571px;width:13px;height:14px" viewBox="0 0 13 14" ><path fill="#6d6cb0" d="M1.2 0.8h9.8v12.1h1v0.9H0.2v-0.9h1z"/><g fill="#fff"><rect x="4" y="2.1" width="1.3" height="1.6"/><rect x="7.3" y="2.1" width="1.3" height="1.6"/><rect x="4" y="5" width="1.3" height="1.1"/><rect x="7.3" y="5" width="1.3" height="1.1"/><rect x="4" y="7.1" width="1.3" height="1.6"/><rect x="7.3" y="7.1" width="1.3" height="1.6"/><rect x="5.3" y="10" width="1.5" height="2.9"/></g></svg>
<div class="t" style="left:501px;top:571px;font-size:13px;line-height:15px;color:#0a1464;letter-spacing:-0.2px;font-weight:normal;">Isabelle Mickaël</div>
<div class="t" style="left:454px;width:600px;text-align:center;top:571px;font-size:13px;line-height:15px;color:#222;letter-spacing:-0.2px;font-weight:normal;">04/11/2021</div>
<div class="t" style="left:629px;width:600px;text-align:center;top:571px;font-size:13px;line-height:15px;color:#222;letter-spacing:-0.2px;font-weight:normal;">19/11/2021</div>
<div class="t" style="left:542px;width:600px;text-align:right;top:571px;font-size:13px;line-height:15px;color:#0b5f63;letter-spacing:-0.2px;font-weight:normal;">0,00</div>
<div class="t" style="left:681px;width:600px;text-align:right;top:571px;font-size:13px;line-height:15px;color:#0b5f63;letter-spacing:-0.2px;font-weight:normal;">0,00</div>
<div class="t" style="left:821px;width:600px;text-align:right;top:571px;font-size:13px;line-height:15px;color:#0b5f63;letter-spacing:-0.2px;font-weight:normal;">0,00</div>
<svg style="position:absolute;left:1432px;top:565px;width:28px;height:28px" viewBox="0 0 28 28" ><ellipse cx="13.4" cy="11" rx="4.2" ry="5.3" fill="#6f6f6b"/><path fill="#5f5f5a" d="M11.2 15h4.4l0.6 2.3h-5.6z"/><ellipse cx="13.45" cy="20.3" rx="7.2" ry="3.5" fill="#585853"/></svg>
<div class="t" style="left:1458px;top:571px;font-size:13px;line-height:15px;color:#0a1464;letter-spacing:-0.2px;font-weight:normal;">doli marketPlace</div>
<div class="t" style="left:1762px;top:570px;width:57px;height:18px;border:1px solid #cbd3d3;border-radius:3px;color:#999;font-size:13px;line-height:18px;text-align:center;letter-spacing:-0.2px">Brouillon</div>
<div style="position:absolute;left:1857px;top:571px;width:11px;height:11px;border:1px solid #767676;border-radius:2px;background:#fff"></div>
<div style="position:absolute;left:262px;top:599px;width:1636px;height:36px;background:#fcfcfd"></div>
<div style="position:absolute;left:262px;top:635px;width:1636px;height:1px;background:#e1e2e5"></div>
<svg style="position:absolute;left:269.8px;top:608.5px;width:15px;height:13.3px" viewBox="5 5.4 24 21.3" ><path fill="#6b9a35" d="M5 6.2Q5 5.4 5.8 5.4H14V11.5H21V13.2L16 18.8V23.2H21V26Q21 26.7 20.2 26.7H5.8Q5 26.7 5 26Z"/><path fill="#6b9a35" d="M15.2 5.4L21 10.7H15.2Z"/><path fill="#6b9a35" d="M16.3 22.9L17.1 19.6L25.2 11.6L27.8 14.2L19.7 22.2Z"/><path fill="#6b9a35" d="M25.9 10.9L26.8 10Q27.4 9.6 27.9 10L29 11.1Q29.4 11.6 29 12.2L28.5 13.5Z"/><path d="M7.8 23.3L10.3 19.8L12.5 22.8L14.5 22.8" stroke="#fff" stroke-width="1" fill="none"/></svg>
<div class="t" style="left:289px;top:608px;font-size:13px;line-height:15px;color:#0a1464;letter-spacing:-0.2px;font-weight:normal;">(PROV13)</div>
<svg style="position:absolute;left:351px;top:610px;width:14px;height:12px" viewBox="0 0 14 12" ><path fill="#9d9d9d" d="M5.1 0h3.7v3.6h2.1L6.95 8.2 3 3.6h2.1z"/><path fill="#9d9d9d" d="M0.2 7.7h4.4l2.35 1.9 2.35-1.9h4.3V12H0.2z"/><circle cx="10.6" cy="10.1" r="0.5" fill="#e8e8e8"/><circle cx="12" cy="10.1" r="0.5" fill="#e8e8e8"/></svg>
<svg style="position:absolute;left:485px;top:608px;width:13px;height:14px" viewBox="0 0 13 14" ><path fill="#6d6cb0" d="M1.2 0.8h9.8v12.1h1v0.9H0.2v-0.9h1z"/><g fill="#fff"><rect x="4" y="2.1" width="1.3" height="1.6"/><rect x="7.3" y="2.1" width="1.3" height="1.6"/><rect x="4" y="5" width="1.3" height="1.1"/><rect x="7.3" y="5" width="1.3" height="1.1"/><rect x="4" y="7.1" width="1.3" height="1.6"/><rect x="7.3" y="7.1" width="1.3" height="1.6"/><rect x="5.3" y="10" width="1.5" height="2.9"/></g></svg>
<div class="t" style="left:501px;top:608px;font-size:13px;line-height:15px;color:#0a1464;letter-spacing:-0.2px;font-weight:normal;">Isabelle Mickaël</div>
<div class="t" style="left:454px;width:600px;text-align:center;top:608px;font-size:13px;line-height:15px;color:#222;letter-spacing:-0.2px;font-weight:normal;">21/01/2022</div>
<div class="t" style="left:629px;width:600px;text-align:center;top:608px;font-size:13px;line-height:15px;color:#222;letter-spacing:-0.2px;font-weight:normal;">05/02/2022</div>
<div class="t" style="left:542px;width:600px;text-align:right;top:608px;font-size:13px;line-height:15px;color:#0b5f63;letter-spacing:-0.2px;font-weight:normal;">1 752,00</div>
<div class="t" style="left:681px;width:600px;text-align:right;top:608px;font-size:13px;line-height:15px;color:#0b5f63;letter-spacing:-0.2px;font-weight:normal;">262,80</div>
<div class="t" style="left:821px;width:600px;text-align:right;top:608px;font-size:13px;line-height:15px;color:#0b5f63;letter-spacing:-0.2px;font-weight:normal;">2 014,80</div>
<svg style="position:absolute;left:1432px;top:602px;width:28px;height:28px" viewBox="0 0 28 28" ><ellipse cx="13.4" cy="11" rx="4.2" ry="5.3" fill="#6f6f6b"/><path fill="#5f5f5a" d="M11.2 15h4.4l0.6 2.3h-5.6z"/><ellipse cx="13.45" cy="20.3" rx="7.2" ry="3.5" fill="#585853"/></svg>
<div class="t" style="left:1458px;top:608px;font-size:13px;line-height:15px;color:#0a1464;letter-spacing:-0.2px;font-weight:normal;">doli marketPlace</div>
<div class="t" style="left:1762px;top:607px;width:57px;height:18px;border:1px solid #cbd3d3;border-radius:3px;color:#999;font-size:13px;line-height:18px;text-align:center;letter-spacing:-0.2px">Brouillon</div>
<div style="position:absolute;left:1857px;top:608px;width:11px;height:11px;border:1px solid #767676;border-radius:2px;background:#fff"></div>
<div style="position:absolute;left:262px;top:636px;width:1636px;height:36px;background:#ffffff"></div>
<div style="position:absolute;left:262px;top:672px;width:1636px;height:1px;background:#e1e2e5"></div>
<svg style="position:absolute;left:269.8px;top:645.5px;width:15px;height:13.3px" viewBox="5 5.4 24 21.3" ><path fill="#6b9a35" d="M5 6.2Q5 5.4 5.8 5.4H14V11.5H21V13.2L16 18.8V23.2H21V26Q21 26.7 20.2 26.7H5.8Q5 26.7 5 26Z"/><path fill="#6b9a35" d="M15.2 5.4L21 10.7H15.2Z"/><path fill="#6b9a35" d="M16.3 22.9L17.1 19.6L25.2 11.6L27.8 14.2L19.7 22.2Z"/><path fill="#6b9a35" d="M25.9 10.9L26.8 10Q27.4 9.6 27.9 10L29 11.1Q29.4 11.6 29 12.2L28.5 13.5Z"/><path d="M7.8 23.3L10.3 19.8L12.5 22.8L14.5 22.8" stroke="#fff" stroke-width="1" fill="none"/></svg>
<div class="t" style="left:289px;top:645px;font-size:13px;line-height:15px;color:#0a1464;letter-spacing:-0.2px;font-weight:normal;">(PROV11)</div>
<svg style="position:absolute;left:350px;top:647px;width:14px;height:12px" viewBox="0 0 14 12" ><path fill="#9d9d9d" d="M5.1 0h3.7v3.6h2.1L6.95 8.2 3 3.6h2.1z"/><path fill="#9d9d9d" d="M0.2 7.7h4.4l2.35 1.9 2.35-1.9h4.3V12H0.2z"/><circle cx="10.6" cy="10.1" r="0.5" fill="#e8e8e8"/><circle cx="12" cy="10.1" r="0.5" fill="#e8e8e8"/></svg>
<svg style="position:absolute;left:485px;top:645px;width:13px;height:14px" viewBox="0 0 13 14" ><path fill="#6d6cb0" d="M1.2 0.8h9.8v12.1h1v0.9H0.2v-0.9h1z"/><g fill="#fff"><rect x="4" y="2.1" width="1.3" height="1.6"/><rect x="7.3" y="2.1" width="1.3" height="1.6"/><rect x="4" y="5" width="1.3" height="1.1"/><rect x="7.3" y="5" width="1.3" height="1.1"/><rect x="4" y="7.1" width="1.3" height="1.6"/><rect x="7.3" y="7.1" width="1.3" height="1.6"/><rect x="5.3" y="10" width="1.5" height="2.9"/></g></svg>
<div class="t" style="left:501px;top:645px;font-size:13px;line-height:15px;color:#0a1464;letter-spacing:-0.2px;font-weight:normal;">Isabelle Mickaël</div>
<div class="t" style="left:454px;width:600px;text-align:center;top:645px;font-size:13px;line-height:15px;color:#222;letter-spacing:-0.2px;font-weight:normal;">21/01/2022</div>
<div class="t" style="left:629px;width:600px;text-align:center;top:645px;font-size:13px;line-height:15px;color:#222;letter-spacing:-0.2px;font-weight:normal;">05/02/2022</div>
<div class="t" style="left:542px;width:600px;text-align:right;top:645px;font-size:13px;line-height:15px;color:#0b5f63;letter-spacing:-0.2px;font-weight:normal;">0,00</div>
<div class="t" style="left:681px;width:600px;text-align:right;top:645px;font-size:13px;line-height:15px;color:#0b5f63;letter-spacing:-0.2px;font-weight:normal;">0,00</div>
<div class="t" style="left:821px;width:600px;text-align:right;top:645px;font-size:13px;line-height:15px;color:#0b5f63;letter-spacing:-0.2px;font-weight:normal;">0,00</div>
<svg style="position:absolute;left:1432px;top:639px;width:28px;height:28px" viewBox="0 0 28 28" ><ellipse cx="13.4" cy="11" rx="4.2" ry="5.3" fill="#6f6f6b"/><path fill="#5f5f5a" d="M11.2 15h4.4l0.6 2.3h-5.6z"/><ellipse cx="13.45" cy="20.3" rx="7.2" ry="3.5" fill="#585853"/></svg>
<div class="t" style="left:1458px;top:645px;font-size:13px;line-height:15px;color:#0a1464;letter-spacing:-0.2px;font-weight:normal;">doli marketPlace</div>
<div class="t" style="left:1762px;top:644px;width:57px;height:18px;border:1px solid #cbd3d3;border-radius:3px;color:#999;font-size:13px;line-height:18px;text-align:center;letter-spacing:-0.2px">Brouillon</div>
<div style="position:absolute;left:1857px;top:645px;width:11px;height:11px;border:1px solid #767676;border-radius:2px;background:#fff"></div>
<div style="position:absolute;left:262px;top:673px;width:1636px;height:29px;background:#fcfcfd"></div>
<div class="t" style="left:270px;top:679px;font-size:13px;line-height:15px;color:#777;letter-spacing:-0.2px;font-weight:normal;">Total</div>
<div class="t" style="left:542px;width:600px;text-align:right;top:679px;font-size:13px;line-height:15px;color:#777;letter-spacing:-0.2px;font-weight:normal;">313 161,69</div>
<div class="t" style="left:681px;width:600px;text-align:right;top:679px;font-size:13px;line-height:15px;color:#777;letter-spacing:-0.2px;font-weight:normal;">12 843,80</div>
<div class="t" style="left:821px;width:600px;text-align:right;top:679px;font-size:13px;line-height:15px;color:#777;letter-spacing:-0.2px;font-weight:normal;">326 005,49</div>
<div style="position:absolute;left:262px;top:702px;width:1636px;height:2px;background:#dcdde1"></div>
<div style="position:absolute;left:240px;top:931px;width:1680px;height:1px;background:#dcdcdc"></div>
<div class="t" style="left:266px;top:942px;font-size:10px;line-height:15px;color:#222;letter-spacing:0px;font-weight:normal;">© 2022 Doli MarketPlace</div>
<div class="t" style="left:1295px;width:600px;text-align:right;top:942px;font-size:10px;line-height:15px;color:#1f1f4a;letter-spacing:0px;font-weight:normal;">© Doli MarketPlace</div>
<div style="position:absolute;left:1867px;top:883px;width:38px;height:38px;border:1px solid #d7d7d7;border-radius:50%;background:#fafafa"></div>
<svg style="position:absolute;left:1882px;top:895px;width:10px;height:17px" viewBox="0 0 10 17" ><path fill="#a9abae" d="M5 0L10 5.5H6.5V17h-3V5.5H0z"/></svg>
</body></html>
